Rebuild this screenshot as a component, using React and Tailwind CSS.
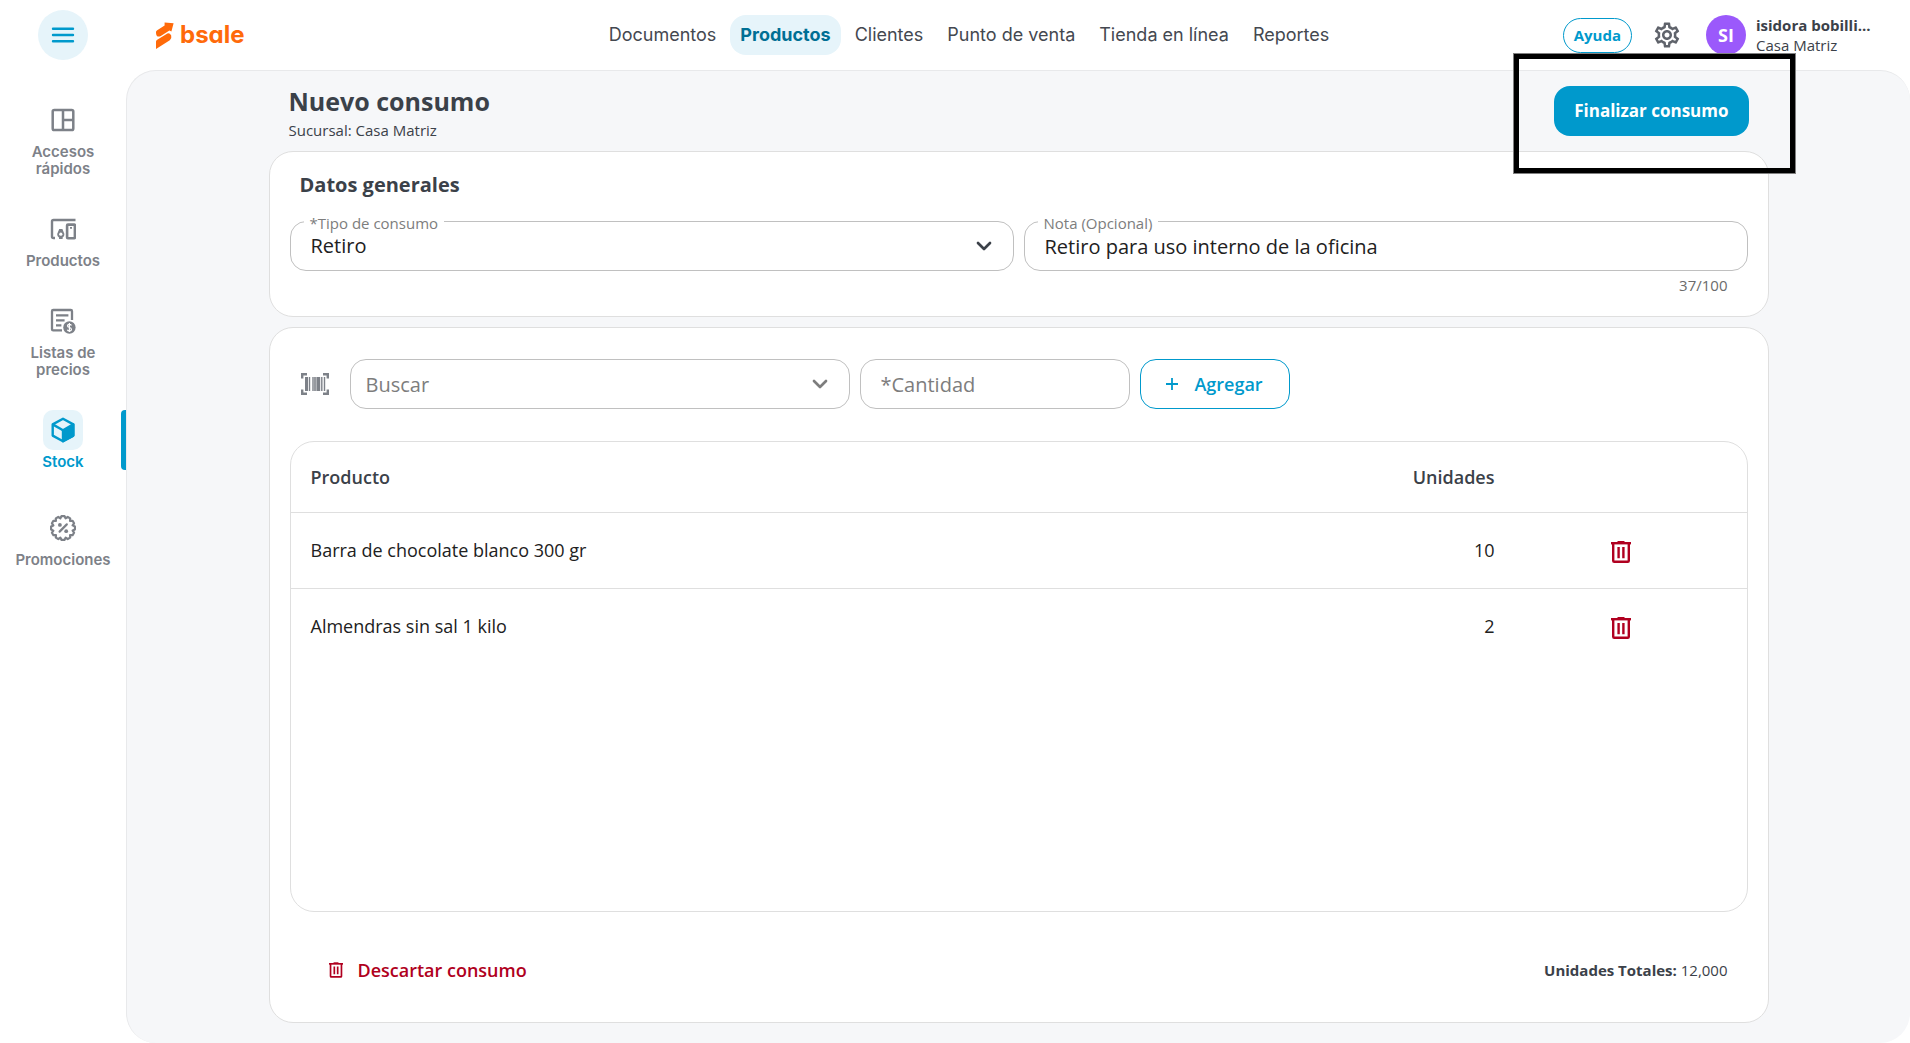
import { useState } from "react";
import { MdOutlineSettings } from "react-icons/md";

const navItems = [
  "Documentos",
  "Productos",
  "Clientes",
  "Punto de venta",
  "Tienda en línea",
  "Reportes",
];

const products = [
  { id: 1, name: "Barra de chocolate blanco 300 gr", units: 10 },
  { id: 2, name: "Almendras sin sal 1 kilo", units: 2 },
];

function DashboardIcon() {
  return (
    <svg width="24" height="24" viewBox="0 0 24 24" fill="none" stroke="currentColor" strokeWidth="2.5" aria-hidden="true">
      <rect x="1.7" y="2" width="20.6" height="20.1" rx="1.6" />
      <path d="M12 2v20.1M12 12h10.3" />
    </svg>
  );
}

function ProductsIcon() {
  return (
    <svg width="26" height="22" viewBox="0 0 26 22" fill="none" stroke="currentColor" aria-hidden="true">
      <path d="M25.5 2H3.5Q2 2 2 3.5V18.5Q2 20 3.5 20H5" strokeWidth="2.4" />
      <path d="M9 21v-1.6a3.5 3.5 0 0 1-1.2-5L9.2 11h3.2l1.4 3.4a3.5 3.5 0 0 1-1.2 5V21z" fill="currentColor" stroke="none" />
      <circle cx="10.8" cy="16.2" r="1.6" fill="#fff" stroke="none" />
      <rect x="17.1" y="6.6" width="7.8" height="13.6" rx="0.8" strokeWidth="2.6" />
      <path d="M20 9.9h2" strokeWidth="1.6" />
    </svg>
  );
}

function PriceListIcon() {
  return (
    <svg width="26" height="26" viewBox="0 0 26 26" fill="none" stroke="currentColor" aria-hidden="true">
      <path d="M12 22.4H3.2Q2 22.4 2 21.2V3.2Q2 2 3.2 2H20.8Q22 2 22 3.2V12" strokeWidth="2.3" />
      <path d="M6 7.3h12.4M6 12.3h8.6M6 17.4h5.4" strokeWidth="2.2" />
      <circle cx="19.4" cy="19.5" r="6.2" fill="currentColor" stroke="none" />
      <path d="M21.4 17.4q-.5-1.1-2-1.1-1.9 0-1.9 1.5t1.9 1.7 2 1.8-2 1.6q-1.6 0-2.1-1.2M19.4 15v9" stroke="#fff" strokeWidth="1.2" />
    </svg>
  );
}

function StockIcon() {
  return (
    <svg width="24" height="26" viewBox="0 0 24 26" fill="none" stroke="currentColor" strokeWidth="2.4" strokeLinejoin="round" aria-hidden="true">
      <path d="M12 1.8 22.3 7.4V18.6L12 24.2 1.7 18.6V7.4z" />
      <path d="M12 13.2 22.3 7.4V18.6L12 24.2z" fill="currentColor" />
      <path d="M1.7 7.4 12 13.2" />
    </svg>
  );
}

function PromoIcon() {
  const points = [];
  for (let i = 0; i < 12; i++) {
    const a = (i * Math.PI) / 6;
    [[-0.12, 12], [0.12, 12], [0.26, 10]].forEach(([d, r]) => {
      points.push(`${(13 + r * Math.cos(a + d)).toFixed(2)},${(13 + r * Math.sin(a + d)).toFixed(2)}`);
    });
  }
  return (
    <svg width="26" height="26" viewBox="0 0 26 26" fill="none" stroke="currentColor" strokeWidth="2.2" strokeLinejoin="round" aria-hidden="true">
      <polygon points={points.join(" ")} />
      <path d="M9.6 16.6 16.8 9.4" strokeLinecap="round" />
      <circle cx="9.9" cy="9.9" r="1.9" fill="currentColor" stroke="none" />
      <circle cx="16.2" cy="16.2" r="1.9" fill="currentColor" stroke="none" />
    </svg>
  );
}

function TrashIcon({ className }) {
  return (
    <svg className={className} viewBox="0 0 20 22" fill="none" stroke="currentColor" strokeWidth="2.4" aria-hidden="true">
      <path d="M0 2.2H20" />
      <path d="M6.5 1H13.5" strokeWidth="2" />
      <path d="M2.2 2.5V19.8Q2.2 20.8 3.2 20.8H16.8Q17.8 20.8 17.8 19.8V2.5" />
      <path d="M7.6 6V17.2M12.4 6V17.2" />
    </svg>
  );
}

function Chevron({ className }) {
  return (
    <svg className={className} width="16" height="10" viewBox="0 0 16 10" fill="none" stroke="currentColor" strokeWidth="2.7" strokeLinecap="round" strokeLinejoin="round" aria-hidden="true">
      <path d="M2 2 8 8 14 2" />
    </svg>
  );
}

function BarcodeIcon() {
  return (
    <svg width="28" height="22" viewBox="0 0 28 22" fill="none" stroke="#7d8188" aria-hidden="true">
      <path d="M6 1.2H1.2V5.5M22 1.2H26.8V5.5M6 20.8H1.2V16.5M22 20.8H26.8V16.5" strokeWidth="2.4" />
      <path d="M5.5 4V18" strokeWidth="3" />
      <path d="M8.5 4V18M12 4V18M20.8 4V18M23.5 4V18" strokeWidth="1.4" />
      <path d="M14 4V18" strokeWidth="1.6" />
      <path d="M17.3 4V18" strokeWidth="3.8" />
    </svg>
  );
}

function Logo() {
  return (
    <a href="#" className="flex items-center gap-1.5 text-[#ff6a0a]">
      <svg width="18" height="27" viewBox="0 0 18 27" fill="currentColor" aria-hidden="true">
        <path d="M0 9.8Q.2 8.8 1.2 8.2L8.6 3.6 8.6 .4 17.6 1.2 15.4 9.4 13.4 8.6 4.8 14Q2 15.4.6 13.4-.1 12 0 9.8z" />
        <path d="M0 27V19.4Q.2 18.4 1.2 17.8L11.4 11.4Q13.8 10.8 15.2 13.4 16 16.4 13.8 18.2z" />
      </svg>
      <span className="text-2xl leading-7 font-bold [font-feature-settings:'cv11']">bsale</span>
    </a>
  );
}

const sideItems = [
  { label: "Accesos rápidos", icon: DashboardIcon },
  { label: "Productos", icon: ProductsIcon },
  { label: "Listas de precios", icon: PriceListIcon },
  { label: "Stock", icon: StockIcon, active: true },
  { label: "Promociones", icon: PromoIcon },
];

function Sidebar() {
  return (
    <nav className="w-[126px] shrink-0 pt-[30px] font-['Inter',sans-serif] text-[15px] leading-[17px] font-semibold">
      <ul className="flex flex-col gap-8">
        {sideItems.map(({ label, icon: Icon, active }) => (
          <li key={label} className="relative last:mt-1.5">
            <a
              href="#"
              className={`flex flex-col items-center gap-[3px] text-center ${active ? "text-[#0099cc]" : "text-[#7d8188]"}`}
            >
              <span className={`flex size-10 items-center justify-center rounded-[10px] ${active ? "bg-[#e6f4fa]" : ""}`}>
                <Icon />
              </span>
              <span className="max-w-[96px]">{label}</span>
            </a>
            {active && <span className="absolute inset-y-0 right-0 w-[5px] rounded-l-sm bg-[#0099cc]" />}
          </li>
        ))}
      </ul>
    </nav>
  );
}

function Header() {
  return (
    <header className="flex h-[70px] shrink-0 items-center pr-2.5 pl-[38px] font-['Inter',sans-serif]">
      <div className="flex flex-1 items-center gap-[68px]">
        <button type="button" aria-label="Menú" className="flex size-[50px] items-center justify-center rounded-full bg-[#e6f4fa] text-[#0099cc]">
          <svg width="24" height="18" viewBox="0 0 24 18" stroke="currentColor" strokeWidth="2.4" strokeLinecap="round" aria-hidden="true">
            <path d="M2 2.7H22M2 9H22M2 15.3H22" />
          </svg>
        </button>
        <Logo />
      </div>
      <nav className="flex gap-1 text-lg text-[#444850]">
        {navItems.map((item) => (
          <a
            key={item}
            href="#"
            className={`flex h-10 items-center rounded-2xl px-2.5 ${item === "Productos" ? "bg-[#e6f4fa] font-bold text-[#006f94]" : ""}`}
          >
            {item}
          </a>
        ))}
      </nav>
      <div className="flex flex-1 items-center justify-end font-['Open_Sans',sans-serif]">
        <button type="button" className="h-[35px] rounded-full border border-[#0099cc] px-2.5 text-[15px] font-bold text-[#0099cc]">
          Ayuda
        </button>
        <button type="button" aria-label="Configuración" className="ml-5 text-[#5f636b]">
          <MdOutlineSettings className="size-[30px]" />
        </button>
        <span className="ml-6 flex size-10 items-center justify-center rounded-full bg-[#9b59fb] text-lg font-bold text-white">
          SI
        </span>
        <div className="mr-6 ml-2.5 w-[120px] text-[15px] leading-5 whitespace-nowrap text-[#3b4149]">
          <p className="font-bold">isidora bobilli...</p>
          <p>Casa Matriz</p>
        </div>
      </div>
    </header>
  );
}

export default function App() {
  const [tipo, setTipo] = useState("Retiro");
  const [nota, setNota] = useState("Retiro para uso interno de la oficina");
  const [buscar, setBuscar] = useState("");
  const [cantidad, setCantidad] = useState("");

  return (
    <div className="flex min-h-screen flex-col bg-white font-['Open_Sans',sans-serif] text-[#3b4149]">
      <Header />
      <div className="flex flex-1">
        <Sidebar />
        <main className="flex min-w-0 flex-1 flex-col rounded-[30px] border-t border-l border-[#e8e9eb] bg-[#f6f7f9] px-8 pb-5">
          <div className="mx-auto flex w-full max-w-[1500px] flex-1 flex-col">
            <div className="flex h-20 items-start justify-between px-5 pt-[15px]">
              <div>
                <h1 className="text-[25px] leading-[30px] font-bold">Nuevo consumo</h1>
                <p className="mt-1 text-[15px] leading-5">Sucursal: Casa Matriz</p>
              </div>
              <div className="relative">
                <button type="button" className="h-[50px] rounded-2xl bg-[#0099cc] px-5 text-[17px] font-bold text-white">
                  Finalizar consumo
                </button>
                <span className="pointer-events-none absolute -top-8 -right-[46px] -bottom-[37px] -left-10 border-5 border-black outline outline-[#808080]" />
              </div>
            </div>

            <section className="rounded-3xl border border-[#dfdfdf] bg-white px-5 py-[21px]">
              <h2 className="px-2.5 text-xl leading-6 font-bold">Datos generales</h2>
              <div className="mt-6 grid grid-cols-2 gap-2.5">
                <div className="relative">
                  <label htmlFor="tipo" className="absolute -top-2 left-3.5 bg-white px-1.5 text-[15px] leading-5 text-[#7d7d7d]">
                    *Tipo de consumo
                  </label>
                  <select
                    id="tipo"
                    value={tipo}
                    onChange={(e) => setTipo(e.target.value)}
                    className="block h-[50px] w-full appearance-none rounded-2xl border border-[#c0c0c0] bg-white px-5 text-xl text-[#212121]"
                  >
                    <option>Retiro</option>
                  </select>
                  <Chevron className="pointer-events-none absolute top-5 right-[22px]" />
                </div>
                <div className="relative">
                  <label htmlFor="nota" className="absolute -top-2 left-3.5 bg-white px-1.5 text-[15px] leading-5 text-[#7d7d7d]">
                    Nota (Opcional)
                  </label>
                  <input
                    id="nota"
                    type="text"
                    maxLength={100}
                    value={nota}
                    onChange={(e) => setNota(e.target.value)}
                    className="block h-[50px] w-full rounded-2xl border border-[#c0c0c0] px-5 text-xl text-[#212121]"
                  />
                </div>
              </div>
              <p className="mt-1 px-5 text-right text-[15px] leading-5 text-[#6b6b6b]">{nota.length}/100</p>
            </section>

            <section className="mt-2.5 flex flex-1 flex-col rounded-3xl border border-[#dfdfdf] bg-white px-5 pt-[31px]">
              <div className="flex items-center gap-2.5">
                <div className="flex w-[50px] pl-[11px]">
                  <BarcodeIcon />
                </div>
                <div className="relative">
                  <input
                    type="text"
                    aria-label="Buscar"
                    placeholder="Buscar"
                    value={buscar}
                    onChange={(e) => setBuscar(e.target.value)}
                    className="block h-[50px] w-[500px] rounded-2xl border border-[#c0c0c0] px-[15px] text-xl placeholder:text-[#7d7d7d]"
                  />
                  <Chevron className="pointer-events-none absolute top-5 right-[22px] text-[#7d7d7d]" />
                </div>
                <input
                  type="text"
                  aria-label="Cantidad"
                  placeholder="*Cantidad"
                  value={cantidad}
                  onChange={(e) => setCantidad(e.target.value)}
                  className="h-[50px] w-[270px] rounded-2xl border border-[#c0c0c0] px-5 text-xl placeholder:text-[#7d7d7d]"
                />
                <button type="button" className="flex h-[50px] w-[150px] items-center justify-center gap-4 rounded-2xl border border-[#0099cc] text-lg font-semibold text-[#0099cc]">
                  <svg width="12" height="12" viewBox="0 0 12 12" stroke="currentColor" strokeWidth="1.8" aria-hidden="true">
                    <path d="M6 0V12M0 6H12" />
                  </svg>
                  Agregar
                </button>
              </div>

              <div className="mt-8 flex-1 overflow-hidden rounded-3xl border border-[#dfdfdf]">
                <table className="w-full text-lg">
                  <thead>
                    <tr className="h-[70px] border-b border-[#dfdfdf]">
                      <th scope="col" className="px-5 text-left font-semibold">Producto</th>
                      <th scope="col" className="px-5 text-right font-semibold">Unidades</th>
                      <th scope="col" className="w-[232px]" aria-label="Acciones" />
                    </tr>
                  </thead>
                  <tbody className="text-[#212121]">
                    {products.map((product) => (
                      <tr key={product.id} className="h-[76px] border-b border-[#dfdfdf] last:border-b-0">
                        <td className="px-5">{product.name}</td>
                        <td className="px-5 text-right">{product.units}</td>
                        <td className="pr-5 text-center">
                          <button type="button" aria-label="Eliminar" className="align-middle text-[#b00020]">
                            <TrashIcon className="h-[22px] w-5" />
                          </button>
                        </td>
                      </tr>
                    ))}
                  </tbody>
                </table>
              </div>

              <div className="flex h-[110px] items-center justify-between pt-1.5 pr-5 pl-[39px]">
                <button type="button" className="flex items-center gap-[15px] text-lg font-semibold text-[#b00020]">
                  <TrashIcon className="h-4 w-3.5" />
                  Descartar consumo
                </button>
                <p className="text-[15px]">
                  <strong>Unidades Totales:</strong> 12,000
                </p>
              </div>
            </section>
          </div>
        </main>
      </div>
    </div>
  );
}
